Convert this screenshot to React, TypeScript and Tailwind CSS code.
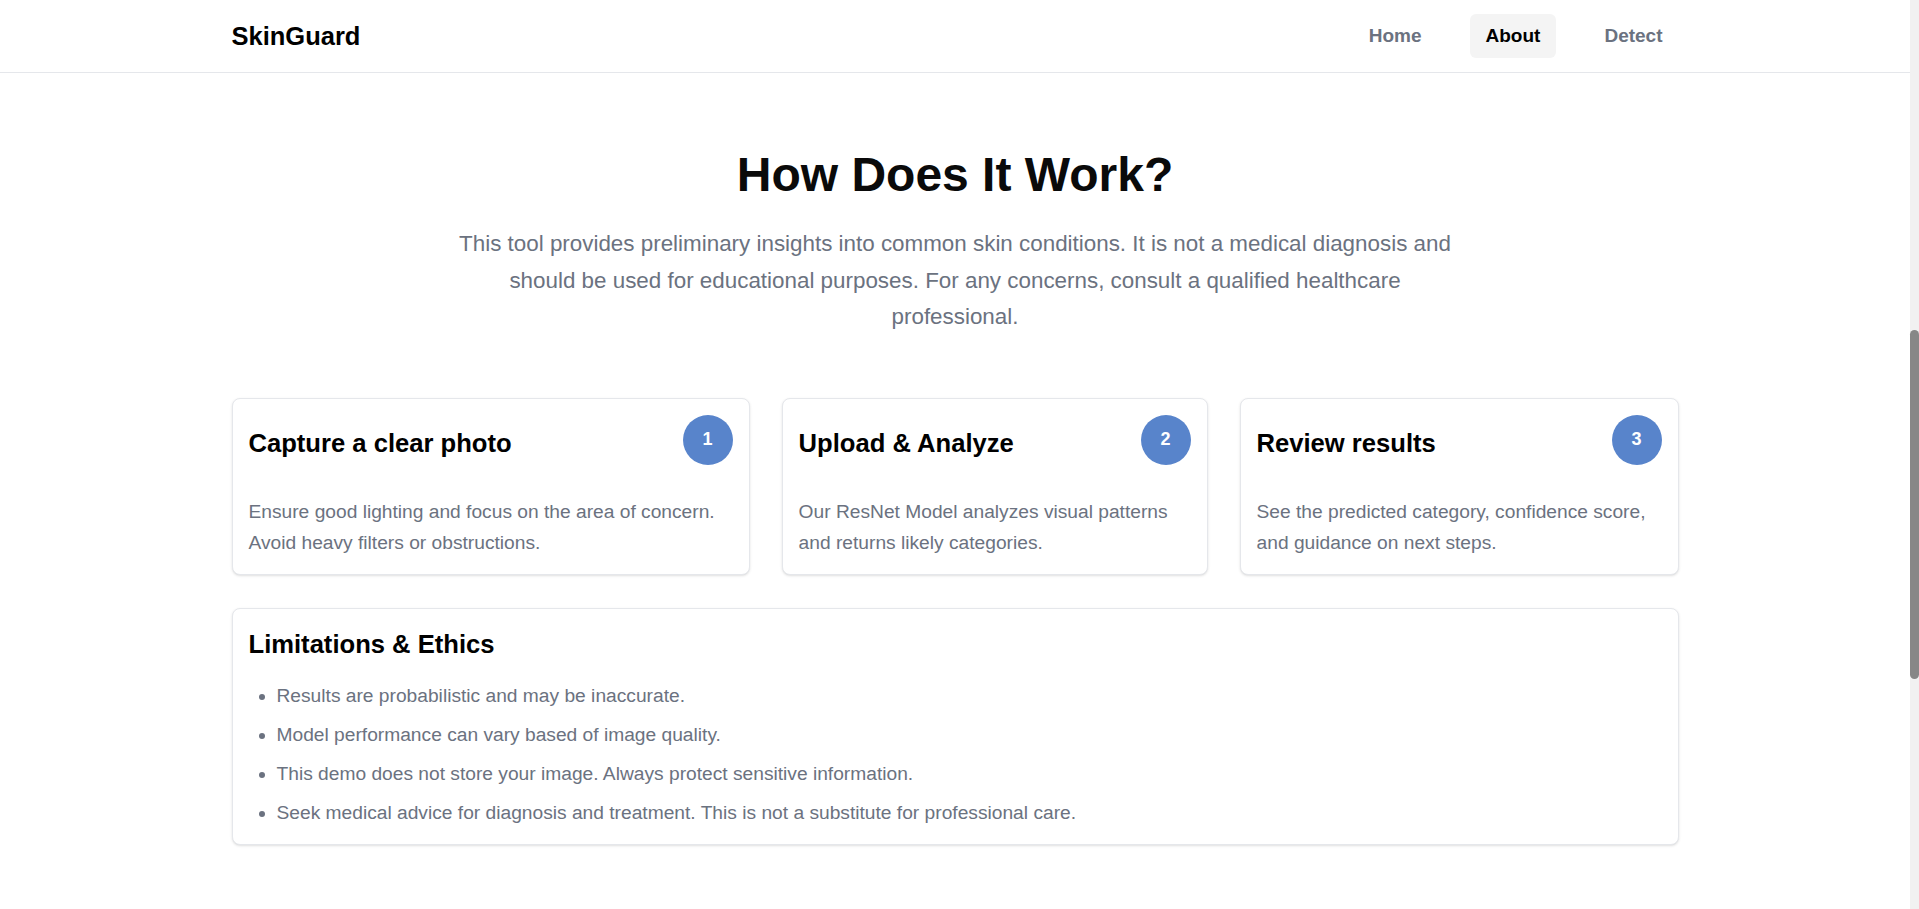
import { useState } from "react";

const steps = [
	{
		n: 1,
		title: "Capture a clear photo",
		text: "Ensure good lighting and focus on the area of concern. Avoid heavy filters or obstructions.",
	},
	{
		n: 2,
		title: "Upload & Analyze",
		text: "Our ResNet Model analyzes visual patterns and returns likely categories.",
	},
	{
		n: 3,
		title: "Review results",
		text: "See the predicted category, confidence score, and guidance on next steps.",
	},
];

const limits = [
	"Results are probabilistic and may be inaccurate.",
	"Model performance can vary based of image quality.",
	"This demo does not store your image. Always protect sensitive information.",
	"Seek medical advice for diagnosis and treatment. This is not a substitute for professional care.",
];

const links = ["Home", "About", "Detect"];

function Navbar() {
	const [active, setActive] = useState("About");

	return (
		<nav className="bg-white border-b border-[#e5e7eb]">
			<div className="mx-auto w-full max-w-[1447px] h-[72px] flex flex-row items-center justify-between">
				<span className="text-[25.5px] font-bold text-black">SkinGuard</span>
				<div className="flex flex-row items-center gap-8">
					{links.map((l) => (
						<button
							key={l}
							onClick={() => setActive(l)}
							className={
								active === l
									? "px-4 py-2 rounded-md bg-[#f4f4f4] text-[19px] leading-7 font-bold text-black"
									: "px-4 py-2 rounded-md text-[19px] leading-7 font-bold text-[#6b7280]"
							}>
							{l}
						</button>
					))}
				</div>
			</div>
		</nav>
	);
}

function StepCard({ n, title, text }: { n: number; title: string; text: string }) {
	return (
		<div className="rounded-lg border border-[#e5e7eb] bg-white p-4 shadow-sm">
			<div className="flex flex-row items-start justify-between gap-4">
				<h3 className="mt-3 text-[25.6px] leading-8 font-bold text-black">{title}</h3>
				<div className="w-[50px] h-[50px] shrink-0 rounded-full bg-[#5884cb] text-white text-[18px] font-bold flex items-center justify-center">
					{n}
				</div>
			</div>
			<p className="mt-[31px] text-[19.2px] leading-[31px] text-[#6b7280]">{text}</p>
		</div>
	);
}

// page scrollbar as it shows in the capture (page is scrolled to the About section)
function Scrollbar() {
	return (
		<div className="w-[9px] shrink-0 h-full bg-[#f1f1f1]">
			<div className="mt-[330px] h-[349px] rounded-full bg-[#878787]" />
		</div>
	);
}

export default function App() {
	return (
		<div className="h-screen overflow-hidden flex flex-row bg-white font-['Liberation_Sans',Arial,sans-serif]">
			<main className="flex-1 min-w-0">
				<Navbar />

				<section id="about" className="mx-auto w-full max-w-[1447px] pb-20">
					<h2 className="mt-[78px] text-center text-[48px] leading-none font-bold text-[#0a0a0a]">
						How Does It Work?
					</h2>
					<p className="mx-auto mt-[27px] max-w-[1010px] text-center text-[22.4px] leading-[36.5px] text-[#6b7280]">
						This tool provides preliminary insights into common skin conditions. It is not a
						medical diagnosis and should be used for educational purposes. For any concerns,
						consult a qualified healthcare professional.
					</p>

					<div className="mt-[62px] grid grid-cols-[517fr_425fr_438fr] gap-8">
						{steps.map((s) => (
							<StepCard key={s.n} {...s} />
						))}
					</div>

					<div className="mt-[33px] rounded-lg border border-[#e5e7eb] bg-white p-4 shadow-sm">
						<h3 className="mt-[3px] text-[25.6px] leading-8 font-bold text-black">
							Limitations &amp; Ethics
						</h3>
						<ul className="mt-5 list-disc pl-7 flex flex-col gap-2">
							{limits.map((l) => (
								<li key={l} className="text-[19.2px] leading-[31px] text-[#6b7280]">
									{l}
								</li>
							))}
						</ul>
					</div>
				</section>
			</main>
			<Scrollbar />
		</div>
	);
}
